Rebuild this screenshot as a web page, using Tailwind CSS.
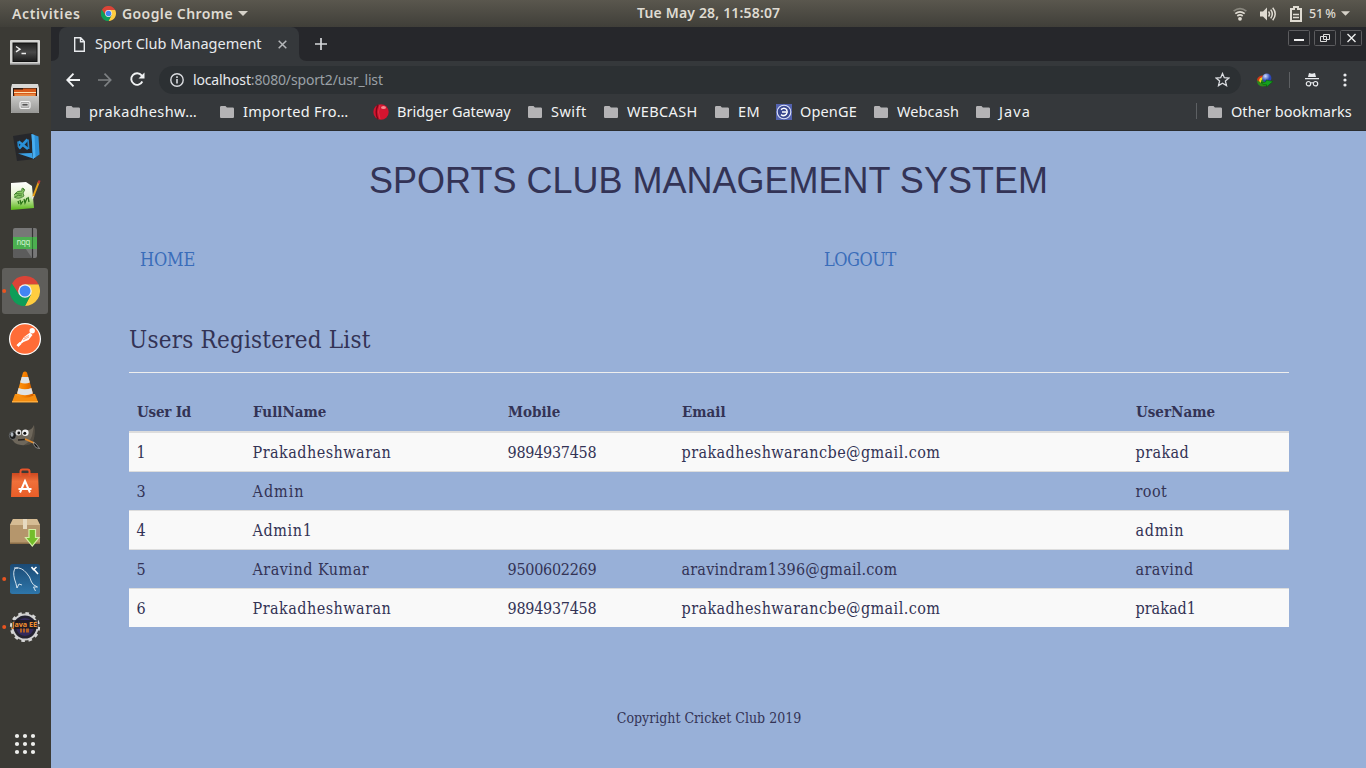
<!DOCTYPE html>
<html lang="en">
<head>
<meta charset="utf-8">
<title>Sport Club Management</title>
<script src="https://cdn.jsdelivr.net/npm/@tailwindcss/browser@4"></script>
</head>
<body class="w-[1366px] h-[768px] overflow-hidden bg-[#98b0d8] font-['Noto_Sans',sans-serif]">
<svg class="hidden">
  <symbol id="folder" viewBox="0 0 14 12"><path d="M1.3 0h4.2l1.4 1.4h5.8c.8 0 1.3.6 1.3 1.3v8c0 .7-.6 1.3-1.3 1.3H1.3C.6 12 0 11.400 0 10.700V1.300C0 .6.6 0 1.300 0z" fill="#b4b3b5"/></symbol>
  <symbol id="chrome" viewBox="0 0 30 30">
    <path d="M15 15V30A15 15 0 0 1 2 7.500z" fill="#0f9d58"/>
    <path d="M15 8.200H28.400A15 15 0 0 1 15 30L20.900 18.400z" fill="#ffcd40"/>
    <path d="M9.100 18.400 2 7.500A15 15 0 0 0 15 30L20.900 18.400z" fill="#0f9d58"/>
    <path d="M15 8.200H28.400A15 15 0 0 0 2 7.500L9.100 18.400z" fill="#db4437"/>
    <circle cx="15" cy="15" r="6.800" fill="#f1f1f1"/><circle cx="15" cy="15" r="5.500" fill="#4285f4"/>
  </symbol>
</svg>
<div class="flex flex-col h-[768px]">
  <header class="h-[27px] shrink-0 flex items-center bg-linear-to-b from-[#5a574e] to-[#403f39] text-[#dfdbd2] text-sm font-semibold leading-[27px] whitespace-nowrap">
    <span class="ml-[12px] w-[89px] tracking-[0.6px]">Activities</span>
    <svg class="size-[15px] mr-[6px]"><use href="#chrome"/></svg>
    <span class="w-[116px] tracking-[0.4px]">Google Chrome</span>
    <svg class="w-[10px] h-[5px]" viewBox="0 0 10 5"><path d="M0 0h10L5 5z" fill="#d6d2c9"/></svg>
    <span class="ml-[389px] w-[597px] tracking-[0.17px] leading-[25px] pb-[2px]">Tue May 28, 11:58:07</span>
    <svg class="w-[14px] h-[14px] -ml-[1px]" viewBox="0 0 14 14" fill="none" stroke="#dfdbd2" stroke-width="1.700"><path d="M.6 4.200Q7-1 13.400 4.200" opacity=".4"/><path d="M2.300 6.700Q7 2.900 11.700 6.700"/><path d="M4.300 9Q7 6.900 9.700 9"/><circle cx="7" cy="11.800" r="1.900" fill="#dfdbd2" stroke="none"/></svg>
    <svg class="w-[16px] h-[14px] ml-[13px]" viewBox="0 0 16 14" fill="none" stroke="#dfdbd2" stroke-width="1.500"><path d="M0 4.500h3L7 .5v13L3 9.500H0z" fill="#dfdbd2" stroke="none"/><path d="M8.500 4.500q2 2.500 0 5M10.700 2.600q3.200 4.400 0 8.800M12.700.8q5 6.200 0 12.400"/></svg>
    <svg class="w-[12px] h-[16px] ml-[14px]" viewBox="0 0 12 16" fill="none" stroke="#dfdbd2" stroke-width="2"><path d="M1 3h3V1h4v2h3v12H1z"/><path d="M3 8.500h6M3 11.500h6" stroke-width="1.600"/></svg>
    <span class="ml-[7px] w-[32px] text-[12.5px] font-medium [word-spacing:-1px] tracking-[-0.1px]">51 %</span>
    <svg class="w-[9px] h-[5px]" viewBox="0 0 10 5"><path d="M0 0h10L5 5z" fill="#d6d2c9"/></svg>
  </header>
  <div class="flex flex-1 min-h-0">
    <nav class="w-[51px] shrink-0 bg-[#3b3a35] flex flex-col">
      <svg class="w-[51px] h-[48px]" viewBox="0 0 51 48"><defs><linearGradient id="tg" x2="0" y2="1"><stop stop-color="#222"/><stop offset=".5" stop-color="#484848"/><stop offset="1" stop-color="#1e1e1e"/></linearGradient></defs><rect x="10" y="13" width="30" height="25" rx="1" fill="#d4d4d2"/><rect x="10" y="36.500" width="30" height="1.500" fill="#888"/><rect x="12.500" y="15.500" width="25" height="19.500" fill="#111"/><rect x="13.500" y="16.500" width="23" height="17.500" fill="url(#tg)"/><path d="m16 19.500 4 2.700-4 2.700M21.500 26.500h4.500" fill="none" stroke="#eee" stroke-width="1.400"/></svg>
      <svg class="w-[51px] h-[48px]" viewBox="0 0 51 48"><defs><linearGradient id="fg" x2="0" y2="1"><stop stop-color="#c8c8c6"/><stop offset="1" stop-color="#979795"/></linearGradient></defs><path d="M12 9h26l1 4v25H11V13z" fill="#d8d8d6"/><rect x="13" y="13" width="24" height="9" fill="#2d1b12"/><path d="M14 14.500h9v-1h13V21H14z" fill="#d65a1c"/><path d="M14 17.500h22" stroke="#ffe0b0"/><path d="M15 20h20" stroke="#f7b36a"/><rect x="11" y="21" width="28" height="17" rx="1" fill="url(#fg)"/><rect x="20" y="26.500" width="10" height="7" rx="1.500" fill="#aaa" stroke="#f2f2f2" stroke-width="1.200"/><rect x="22" y="28.500" width="6" height="2.500" fill="#555" stroke="#fff" stroke-width=".6"/></svg>
      <svg class="w-[51px] h-[48px]" viewBox="0 0 51 48"><path d="m13 13 19-3 3 26-18 2z" fill="#26272b"/><path d="M18.500 18.500 28 26M27.500 16.500 19 25.500" fill="none" stroke="#2a92d8" stroke-width="2.600"/><path d="m28 16.500.7 9.500M18 18.500l.5 5.500" fill="none" stroke="#2484c6" stroke-width="1.600"/><path d="M18 30.500 32 30l1 5.500z" fill="#3ba0e4"/><path d="m31.500 11 7 2.500 1 18-6.500 4.500z" fill="#2b8fd6"/><path d="m31.500 11 3 1 1 22-2.500 2z" fill="#48aef0"/></svg>
      <svg class="w-[51px] h-[48px]" viewBox="0 0 51 48"><defs><linearGradient id="ng" x2="0" y2="1"><stop stop-color="#fff"/><stop offset=".5" stop-color="#e4f2cc"/><stop offset="1" stop-color="#58b817"/></linearGradient></defs><path d="m11 12 15-1 6 4 2 22-23 2z" fill="url(#ng)"/><path d="M14 24q3-5 8-4-1-3 1-3 3 2 0 5l1 3q-5 4-10 1" fill="#8cc868" stroke="#3a7a2b" stroke-width=".8"/><path d="m15 22.500 7 .5M15 26q3-3 7-1M23 18l2 1" stroke="#2b6a1b" stroke-width=".7" fill="none"/><path d="m18 30 1 3M20 29l1 4 2-3M24 28l1 4 2-5M28 26l1 5" fill="none" stroke="#2a7317" stroke-width="1.300"/><path d="M39 10.500 33 26" stroke="#e8a317" stroke-width="2"/><path d="m39.500 9.500-1 3" stroke="#bd3c35" stroke-width="2.200"/><path d="m33.300 25-.8 2.700" stroke="#eee" stroke-width="1.300"/></svg>
      <svg class="w-[51px] h-[48px]" viewBox="0 0 51 48"><rect x="13" y="9" width="24" height="30" rx="2" fill="#777"/><path d="m13 31 8-8 11 16H15q-2 0-2-2z" fill="#5c5c5c"/><path d="M32.500 9v30" stroke="#333" stroke-width="1.200"/><rect x="13" y="18" width="24" height="12" fill="#4caf50"/><path d="M32.500 18v12" stroke="#327b36"/><text x="16.500" y="26" font-size="8" fill="#c9efcb" font-family="Noto Sans" textLength="14">nqq</text></svg>
      <svg class="w-[51px] h-[48px]" viewBox="0 0 51 48"><rect x="2" y="1" width="46" height="46" rx="3" fill="#5f5e5b"/><circle cx="4.200" cy="24" r="2" fill="#e95420"/><use href="#chrome" x="10" y="9" width="30" height="30"/></svg>
      <svg class="w-[51px] h-[48px]" viewBox="0 0 51 48"><circle cx="25" cy="24" r="16" fill="#fff"/><circle cx="25" cy="24" r="14.800" fill="#ff6c37"/><circle cx="32.200" cy="15.800" r="2.700" fill="#fff"/><path d="m30 17.500-6 4.500-3 4.500-4.500 4 2 .3 5-3.800 5-2 4-5z" fill="#fff"/><path d="m17.500 31 3-3" stroke="#fff" stroke-width="2.500"/><path d="m24 23 5-2.500M23 25l6-3" stroke="#ff6c37" stroke-width=".6"/></svg>
      <svg class="w-[51px] h-[48px]" viewBox="0 0 51 48"><defs><linearGradient id="vg"><stop stop-color="#ff9a1c"/><stop offset=".5" stop-color="#f57f00"/><stop offset="1" stop-color="#cf5c00"/></linearGradient></defs><path d="m15 31-3 8h26l-3-8z" fill="#f58d10"/><path d="M12 38h26v1.500H12z" fill="#ffab3b"/><path d="M23 9.500q2-2 4 0l6.500 23q-8.500 4.500-17 0z" fill="url(#vg)"/><path d="m21.700 14h6.600l1.600 5.500q-4.900 2-9.800 0zM18.600 25q6.400 2.500 12.800 0l1.500 5.500q-8 3.500-15.800 0z" fill="#dfe2e5"/></svg>
      <svg class="w-[51px] h-[48px]" viewBox="0 0 51 48"><path d="M16 22q7 2 12-3 4 0 6-5 1 10-1 15-4 6-12 5-8-1-10-8z" fill="#6e675b"/><path d="m33 20 1-6q2 12-2 18-4 3-8 2 8-4 9-14z" fill="#544e44"/><ellipse cx="12.800" cy="24.500" rx="3.500" ry="4" fill="#1c1c1c" stroke="#8a8f94" stroke-width=".6"/><ellipse cx="12" cy="23.500" rx="1.500" ry="2.200" fill="#aab2ba"/><circle cx="18.500" cy="21.500" r="2.900" fill="#e6e6e6"/><circle cx="25.300" cy="21.800" r="3.300" fill="#f2f2f2"/><circle cx="18.800" cy="22" r="1.400" fill="#111"/><circle cx="24.800" cy="22.200" r="1.500" fill="#111"/><path d="m18 29 7-.5" stroke="#262320" stroke-width="1.500"/><path d="m25 28 9 4" stroke="#e38b2c" stroke-width="1.800"/><path d="m33.500 31 3 2.500 3 4q-6-.5-6-6.500z" fill="#151515" stroke="#c7c7c7" stroke-width=".6"/></svg>
      <svg class="w-[51px] h-[48px]" viewBox="0 0 51 48"><defs><linearGradient id="sg" x2="0" y2="1"><stop stop-color="#cc4820"/><stop offset=".35" stop-color="#f0703a"/><stop offset="1" stop-color="#e95d28"/></linearGradient></defs><path d="M12 14h26l1 24H11z" fill="url(#sg)"/><path d="M20.500 17v-4.500q0-2 2-2h5q2 0 2 2V17" fill="none" stroke="#e8542b" stroke-width="2"/><path d="m20 33.500 5-11.500 5 11.500M18.500 30h13" fill="none" stroke="#fff" stroke-width="2"/></svg>
      <svg class="w-[51px] h-[48px]" viewBox="0 0 51 48"><path d="M13 12h24l3 6v19H10V18z" fill="#b99a70"/><path d="M13 12h24l3 6H10z" fill="#d6bc94"/><path d="M10 18h30v19H10z" fill="#b5966c"/><path d="M10 35.500h30V37H10z" fill="#8b6e49"/><path d="M23 12h4v10h-4z" fill="#e6d9c0"/><path d="M29 22.500h6.500v8H39L32.300 39l-6.800-8.500H29z" fill="#73bd2a" stroke="#d3f0a4" stroke-width="1.200"/></svg>
      <svg class="w-[51px] h-[48px]" viewBox="0 0 51 48"><defs><linearGradient id="wg" x2="0" y2="1"><stop stop-color="#1b4a75"/><stop offset="1" stop-color="#2e76aa"/></linearGradient></defs><circle cx="4.200" cy="24" r="2" fill="#e95420"/><rect x="10" y="9" width="30" height="30" rx="2.500" fill="url(#wg)"/><path d="M17 33q-1-5-2.500-9-2-8 1-11 6-1 11 5l3 4 2 5q1 3 6 5l-4 0 2 4M17 33l2-4 3 1M14 13l4 0" fill="none" stroke="#e5eef5" stroke-width=".9"/><path d="m31.500 12 2 2.500 3-2.500M34 14.500l4 4.500" stroke="#fff" stroke-width="1.600" fill="none"/></svg>
      <svg class="w-[51px] h-[48px]" viewBox="0 0 51 48"><circle cx="4.200" cy="24" r="2" fill="#e95420"/><circle cx="25" cy="24" r="12.500" fill="#242230" stroke="#cfcfcf" stroke-width="2"/><circle cx="25" cy="24" r="13.900" fill="none" stroke="#d5d5d5" stroke-width="2.400" stroke-dasharray="3.600 3.678"/><circle cx="25" cy="24" r="9" fill="#332a5c"/><path d="M12 17h26v9H12z" fill="#1b1716" opacity=".75"/><text x="12" y="23.500" font-size="6.500" font-weight="700" fill="#f09030" font-family="Noto Sans" textLength="25" lengthAdjust="spacingAndGlyphs">Java EE</text><path d="M20 25.500h2v4h-2zM23 25.500h2v4h-2zM26 25.500h3v4h-3z" fill="#b26024"/></svg>
      <svg class="w-[51px] h-[48px] mt-auto" viewBox="0 0 51 48" fill="#eeeeec"><circle cx="17" cy="16" r="2.100"/><circle cx="25" cy="16" r="2.100"/><circle cx="33" cy="16" r="2.100"/><circle cx="17" cy="24" r="2.100"/><circle cx="25" cy="24" r="2.100"/><circle cx="33" cy="24" r="2.100"/><circle cx="17" cy="32" r="2.100"/><circle cx="25" cy="32" r="2.100"/><circle cx="33" cy="32" r="2.100"/></svg>
    </nav>
    <div class="flex-1 flex flex-col min-w-0">
      <div class="h-[34px] shrink-0 bg-[#26272b] flex items-start text-[#e8eaed] text-[14.5px]">
        <svg class="w-[8px] h-[34px]" viewBox="0 0 8 34"><path d="M0 34q8 0 8-8v8z" fill="#35383b"/></svg>
        <div class="w-[240px] h-[34px] rounded-t-[8px] bg-[#35383b] flex items-center">
          <svg class="w-[11px] h-[15px] ml-[15px] mr-[10px]" viewBox="0 0 11 15" fill="none" stroke="#e8eaed" stroke-width="1.400"><path d="M.7.700h6l3.600 3.800v9.800H.7zM6.500.700v4h4"/></svg>
          <span class="w-[183px] whitespace-nowrap">Sport Club Management</span>
          <svg class="size-[9px]" viewBox="0 0 9 9" stroke="#b5b7ba" stroke-width="1.500"><path d="m.7.700 7.600 7.600M8.300.700.7 8.300"/></svg>
        </div>
        <svg class="w-[8px] h-[34px]" viewBox="0 0 8 34"><path d="M8 34q-8 0-8-8v8z" fill="#35383b"/></svg>
        <svg class="size-[12px] mt-[11px] ml-[8px]" viewBox="0 0 12 12" stroke="#d5d7da" stroke-width="1.700"><path d="M6 0v12M0 6h12"/></svg>
        <div class="ml-auto mr-[4px] mt-[3px] flex gap-[4px]">
          <svg class="w-[22px] h-[16px]" viewBox="0 0 22 16" fill="none"><rect x=".5" y=".5" width="21" height="15" rx="1" stroke="#5c5c5f"/><path d="M6 10h10" stroke="#eee" stroke-width="2"/></svg>
          <svg class="w-[22px] h-[16px]" viewBox="0 0 22 16" fill="none"><rect x=".5" y=".5" width="21" height="15" rx="1" stroke="#5c5c5f"/><path d="M9.500 4.500h6v5h-6zM6.500 6.500h6v5h-6z" stroke="#ddd"/></svg>
          <svg class="w-[22px] h-[16px]" viewBox="0 0 22 16" fill="none"><rect x=".5" y=".5" width="21" height="15" rx="1" stroke="#5c5c5f"/><path d="m7.500 4 8 8M15.500 4l-8 8" stroke="#eee" stroke-width="1.400"/></svg>
        </div>
      </div>
      <div class="h-[37px] shrink-0 bg-[#35383b] flex items-center">
        <svg class="w-[14px] h-[14px] ml-[15px]" viewBox="0 0 14 14" fill="none" stroke="#f1f3f4" stroke-width="1.900"><path d="M14 7H1.500M7.500.700 1.300 7l6.200 6.300"/></svg>
        <svg class="w-[14px] h-[14px] ml-[18px]" viewBox="0 0 14 14" fill="none" stroke="#7d8083" stroke-width="1.700"><path d="M0 7h12.500M6.500.700 12.700 7l-6.200 6.300"/></svg>
        <svg class="w-[15px] h-[15px] ml-[18px]" viewBox="0 0 15 15"><path d="M12.300 9.500A5.800 5.800 0 1 1 11.600 3.400L13 5" fill="none" stroke="#f1f3f4" stroke-width="1.900"/><path d="M14.500.5v6H8.500z" fill="#f1f3f4"/></svg>
        <div class="ml-[14px] w-[1082px] h-[28px] rounded-full bg-[#2c3033] flex items-center text-sm text-[#9aa0a6]">
          <svg class="size-[14px] ml-[11px] mr-[9px]" viewBox="0 0 14 14" fill="none" stroke="#dadce0"><circle cx="7" cy="7" r="6.200" stroke-width="1.400"/><path d="M7 6v4.500M7 3.300v1.600" stroke-width="1.600"/></svg>
          <span class="whitespace-nowrap tracking-[-0.15px]"><span class="text-[#e8eaed]">localhost</span>:8080/sport2/usr_list</span>
          <svg class="size-[15px] ml-auto mr-[11px]" viewBox="0 0 15 15" fill="none" stroke="#dadce0" stroke-width="1.300"><path d="m7.500 1.500 1.800 4.200 4.600.4-3.500 3 1.100 4.500-4-2.400-4 2.400 1.100-4.500-3.500-3 4.600-.4z"/></svg>
        </div>
        <svg class="w-[17px] h-[16px] ml-[15px]" viewBox="0 0 17 16"><defs><radialGradient id="gl" cx=".35" cy=".3"><stop stop-color="#cfe0ff"/><stop offset="1" stop-color="#2b45b5"/></radialGradient></defs><path d="M1 8q1-4 6-4.500l3 6V14q-9 2-9-6z" fill="#2c8a1c"/><path d="M1 8q1-4.500 6-4.500V6Q3 6 3.500 10z" fill="#d5321b"/><path d="M3 9q0-3.500 4-4v2Q4.500 8 5 11z" fill="#f3d21e"/><circle cx="10.800" cy="6" r="4.600" fill="url(#gl)"/><path d="M5 10.500q3 .5 5-1V8l7 1.500-6.500 5.500v-2.200Q7 13.500 5 10.500z" fill="#14a01e" stroke="#075a0c" stroke-width=".6"/></svg>
        <span class="w-px h-[16px] bg-[#5d6063] ml-[16px]"></span>
        <svg class="w-[14px] h-[14px] ml-[15px]" viewBox="0 0 14 14" fill="none" stroke="#e8eaed"><path d="M4 0 7 .7 10 0l1 4H3zM0 5h14v1.300H0z" fill="#e8eaed" stroke="none"/><circle cx="3.500" cy="10.700" r="2.200" stroke-width="1.200"/><circle cx="10.500" cy="10.700" r="2.200" stroke-width="1.200"/><path d="M5.700 10q1.300-.6 2.600 0"/></svg>
        <svg class="w-[4px] h-[14px] ml-[24px]" viewBox="0 0 4 14" fill="#e8eaed"><circle cx="2" cy="2" r="1.600"/><circle cx="2" cy="7" r="1.600"/><circle cx="2" cy="12" r="1.600"/></svg>
      </div>
      <div class="h-[33px] shrink-0 bg-[#35383b] border-b border-[#2a2c2e] flex items-center pb-[5px] pl-[15px] text-[14.5px] text-[#f1f3f4] whitespace-nowrap leading-5 [&_span]:-translate-y-px">
        <div class="w-[154px] flex items-center gap-[9px]"><svg class="w-[14px] h-[12px]"><use href="#folder"/></svg><span class="tracking-[0.45px]">prakadheshw…</span></div>
        <div class="w-[153px] flex items-center gap-[9px]"><svg class="w-[14px] h-[12px]"><use href="#folder"/></svg><span class="tracking-[0.3px]">Imported Fro…</span></div>
        <div class="w-[155px] flex items-center gap-[8px]"><svg class="size-[16px]" viewBox="0 0 16 16"><circle cx="8" cy="8" r="7.700" fill="#d4142f"/><path d="M5 .8Q1.500 8 5 15.200" stroke="#7d0819" stroke-width="1.500" fill="none"/><path d="M7 1Q4 8 7 15" stroke="#e23a4a" stroke-width=".8" fill="none"/><ellipse cx="10.500" cy="3.500" rx="2.500" ry="1.500" fill="#f28a8f"/></svg><span>Bridger Gateway</span></div>
        <div class="w-[76px] flex items-center gap-[9px]"><svg class="w-[14px] h-[12px]"><use href="#folder"/></svg><span class="tracking-[0.5px]">Swift</span></div>
        <div class="w-[111px] flex items-center gap-[9px]"><svg class="w-[14px] h-[12px]"><use href="#folder"/></svg><span class="tracking-[0.35px]">WEBCASH</span></div>
        <div class="w-[61px] flex items-center gap-[9px]"><svg class="w-[14px] h-[12px]"><use href="#folder"/></svg><span class="tracking-[0.4px]">EM</span></div>
        <div class="w-[98px] flex items-center gap-[8px]"><svg class="size-[16px]" viewBox="0 0 16 16" fill="none"><rect width="16" height="16" fill="#5362ae"/><circle cx="8" cy="8" r="6.800" fill="#39478f" stroke="#dde2f8" stroke-width="1.100"/><path d="M6 8h4.200M5 5.600Q8 2.800 10.600 5.600 12 8 10.300 10.300 8 12.800 5 10.600" stroke="#fff" stroke-width="1.500"/></svg><span class="tracking-[0.15px]">OpenGE</span></div>
        <div class="w-[102px] flex items-center gap-[9px]"><svg class="w-[14px] h-[12px]"><use href="#folder"/></svg><span class="tracking-[0.1px]">Webcash</span></div>
        <div class="flex items-center gap-[9px]"><svg class="w-[14px] h-[12px]"><use href="#folder"/></svg><span class="tracking-[1.1px]">Java</span></div>
        <div class="ml-auto w-[170px] flex items-center"><span class="w-px h-[16px] bg-[#5d6063] mr-[11px]"></span><svg class="w-[14px] h-[12px] mr-[9px]"><use href="#folder"/></svg><span class="tracking-[0.05px]">Other bookmarks</span></div>
      </div>
      <main class="flex-1 bg-[#98b0d8] pl-[78px] pr-[77px] text-[#333355] font-['Roboto_Slab','DejaVu_Serif_Condensed','DejaVu_Serif',serif] text-[16px]">
        <h1 class="pt-[30px] mr-px text-center font-['Liberation_Sans',Arial,sans-serif] text-[36px] leading-[40px] whitespace-nowrap">SPORTS CLUB MANAGEMENT SYSTEM</h1>
        <div class="mt-[46px] flex text-[18px] leading-[26px] text-[#3a6dba] pl-[11px]">
          <a class="w-[684px] tracking-[-0.2px]">HOME</a><a class="tracking-[-0.5px]">LOGOUT</a>
        </div>
        <h2 class="mt-[51px] h-[49px] border-b border-[#eee] text-[24px] leading-[32px] tracking-[0.2px] whitespace-nowrap">Users Registered List</h2>
        <table class="mt-[20px] w-[1160px] table-fixed border-separate border-spacing-0 text-left leading-[22px] tracking-[0.42px] [&_th]:p-0 [&_th]:pl-2 [&_th]:border-b-2 [&_th]:border-[#ddd] [&_td]:p-0 [&_td]:pt-[2px] [&_td]:pl-[7.5px] [&_td:nth-child(3)]:tracking-[-0.27px]">
          <colgroup><col class="w-[116px]"><col class="w-[255px]"><col class="w-[174px]"><col class="w-[454px]"><col class="w-[161px]"></colgroup>
          <thead><tr class="h-[40px] text-[15px] tracking-[0px]"><th class="tracking-[-0.2px]">User Id</th><th>FullName</th><th>Mobile</th><th>Email</th><th>UserName</th></tr></thead>
          <tbody>
            <tr class="h-[38px] bg-[#f9f9f9]"><td>1</td><td class="tracking-[0.47px]">Prakadheshwaran</td><td>9894937458</td><td>prakadheshwarancbe@gmail.com</td><td>prakad</td></tr>
            <tr class="h-[39px] [&_td]:border-t [&_td]:border-[#ddd]"><td>3</td><td class="tracking-[1px]">Admin</td><td></td><td></td><td>root</td></tr>
            <tr class="h-[39px] bg-[#f9f9f9] [&_td]:border-t [&_td]:border-[#ddd]"><td>4</td><td class="tracking-[0.6px]">Admin1</td><td></td><td></td><td class="tracking-[0.7px]">admin</td></tr>
            <tr class="h-[39px] [&_td]:border-t [&_td]:border-[#ddd]"><td>5</td><td class="tracking-[0.47px]">Aravind Kumar</td><td>9500602269</td><td class="tracking-[0.2px]">aravindram1396@gmail.com</td><td>aravind</td></tr>
            <tr class="h-[39px] bg-[#f9f9f9] [&_td]:border-t [&_td]:border-[#ddd]"><td>6</td><td class="tracking-[0.47px]">Prakadheshwaran</td><td>9894937458</td><td>prakadheshwarancbe@gmail.com</td><td class="tracking-[0px]">prakad1</td></tr>
          </tbody>
        </table>
        <footer class="mt-[81px] text-center text-[14px] leading-5">Copyright Cricket Club 2019</footer>
      </main>
    </div>
  </div>
</div>
</body>
</html>
